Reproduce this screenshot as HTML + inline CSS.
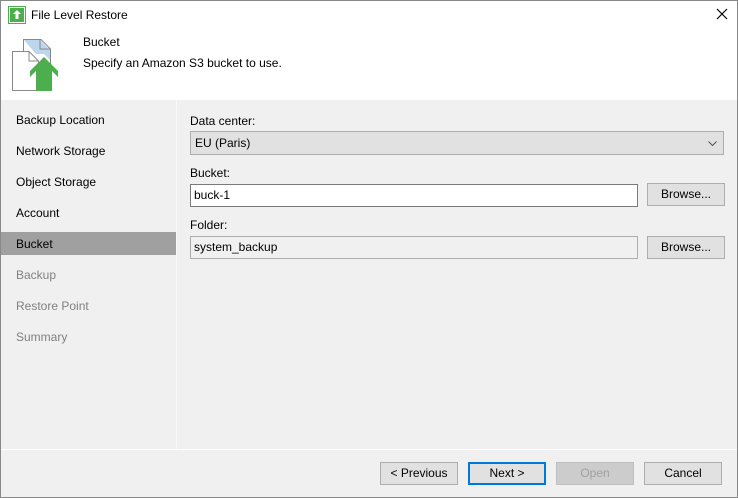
<!DOCTYPE html>
<html><head><style>
*{box-sizing:border-box;margin:0;padding:0}
body{width:738px;height:498px;overflow:hidden;font-family:"Liberation Sans",sans-serif;font-size:12px;color:#000;background:#f0f0f0;position:relative}
.a{position:absolute}
.win{left:0;top:0;width:738px;height:498px;border:1px solid #888;}
.btn{position:absolute;height:23px;background:#e1e1e1;border:1px solid #adadad;text-align:center;line-height:21px}
.nav{position:absolute;left:16px;color:#000}
.dis{color:#808080}
</style></head><body>
<div class="a" style="left:0;top:0;width:738px;height:100px;background:#fff"></div>
<div class="a" style="left:0;top:100px;width:177px;height:349px;background:#f0f0f0;border-right:1px solid #fafafa"></div>
<div class="a" style="left:0;top:449px;width:738px;height:1px;background:#fff"></div>
<div class="a win"></div>
<svg class="a" style="left:8px;top:6px" width="18" height="18" viewBox="0 0 18 18"><rect x="0.5" y="0.5" width="17" height="17" fill="#fff" stroke="#4cae4c"/><rect x="2" y="2" width="14" height="14" fill="#4cae4c"/><path d="M9 4 L13 8 H10.5 V13 H7.5 V8 H5 Z" fill="#fff"/></svg>
<div class="a" style="left:31px;top:8px;font-size:12px">File Level Restore</div>
<svg class="a" style="left:716px;top:8px" width="12" height="12" viewBox="0 0 12 12"><path d="M1 1 L11 11 M11 1 L1 11" stroke="#000" stroke-width="1.2"/></svg>
<svg class="a" style="left:10px;top:38px" width="56" height="56" viewBox="0 0 56 56">
<path d="M13.5 1.5 H31 L40.5 11 V32 H13.5 Z" fill="#fff" stroke="#888"/>
<path d="M14 2 H30 L40 12 V22 L34 16 H26 Z" fill="#bcd6ee"/>
<path d="M30 2 V11 H40" fill="none" stroke="#888"/>
<path d="M2.5 13.5 H19 L28.5 23 V52.5 H2.5 Z" fill="#fff" stroke="#888"/>
<path d="M19 13.5 V23 H28.5" fill="none" stroke="#888"/>
<path d="M34 20 L48 34 V40 L42 34 V54 H26 V34 L20 40 V34 Z" fill="#4cae4c" transform="translate(0,-1)"/>
</svg>
<div class="a" style="left:83px;top:35px">Bucket</div>
<div class="a" style="left:83px;top:56px">Specify an Amazon S3 bucket to use.</div>
<div class="a" style="left:1px;top:232px;width:175px;height:23px;background:#a0a0a0"></div>
<div class="nav" style="top:113px">Backup Location</div>
<div class="nav" style="top:144px">Network Storage</div>
<div class="nav" style="top:175px">Object Storage</div>
<div class="nav" style="top:206px">Account</div>
<div class="nav" style="top:237px">Bucket</div>
<div class="nav dis" style="top:268px">Backup</div>
<div class="nav dis" style="top:299px">Restore Point</div>
<div class="nav dis" style="top:330px">Summary</div>
<div class="a" style="left:190px;top:114px">Data center:</div>
<div class="a" style="left:190px;top:131px;width:534px;height:24px;background:#e1e1e1;border:1px solid #adadad;padding-left:4px;line-height:22px">EU (Paris)<svg style="position:absolute;right:6px;top:9px" width="9" height="6" viewBox="0 0 9 6"><path d="M0.5 0.5 L4.5 4.5 L8.5 0.5" fill="none" stroke="#555"/></svg></div>
<div class="a" style="left:190px;top:166px">Bucket:</div>
<div class="a" style="left:190px;top:184px;width:448px;height:23px;background:#fff;border:1px solid #7a7a7a;padding-left:3px;line-height:21px">buck-1</div>
<div class="btn" style="left:647px;top:183px;width:78px">Browse...</div>
<div class="a" style="left:190px;top:218px">Folder:</div>
<div class="a" style="left:190px;top:236px;width:448px;height:23px;background:#f0f0f0;border:1px solid #adadad;padding-left:3px;line-height:21px">system_backup</div>
<div class="btn" style="left:647px;top:236px;width:78px">Browse...</div>
<div class="btn" style="left:380px;top:462px;width:78px">&lt; Previous</div>
<div class="btn" style="left:468px;top:462px;width:78px;border:2px solid #0078d7;line-height:19px">Next &gt;</div>
<div class="btn" style="left:556px;top:462px;width:78px;background:#ccc;border-color:#bfbfbf;color:#a0a0a0">Open</div>
<div class="btn" style="left:644px;top:462px;width:78px">Cancel</div>
</body></html>
